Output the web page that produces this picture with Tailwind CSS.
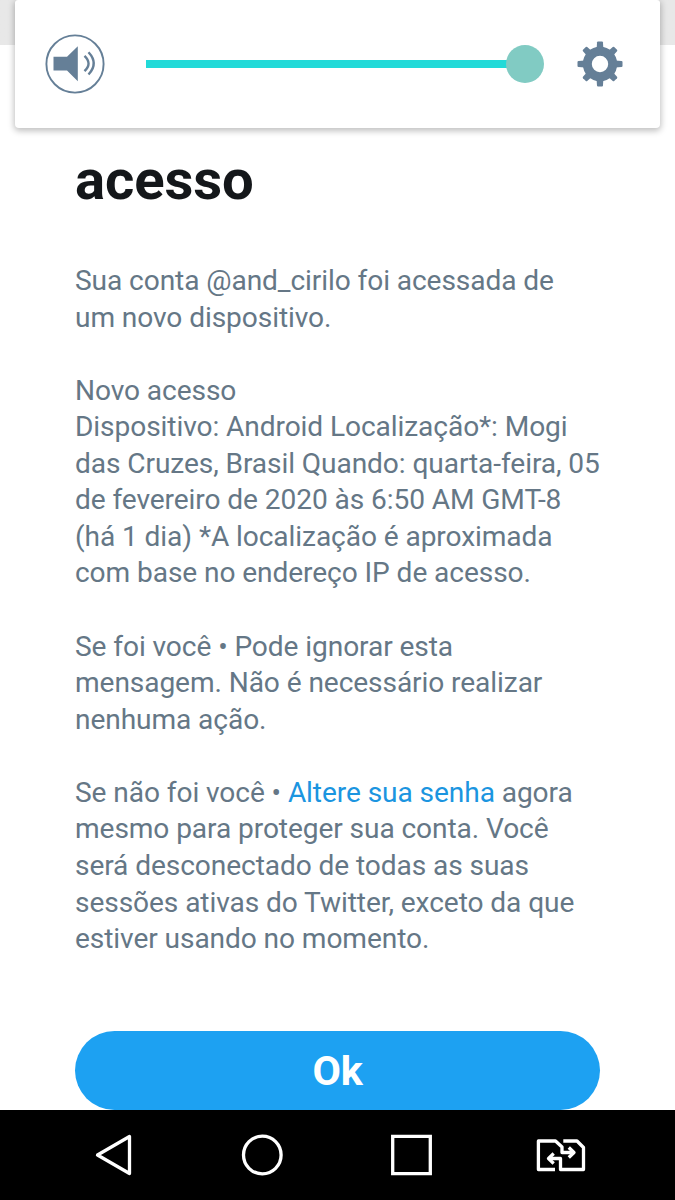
<!DOCTYPE html>
<html lang="pt-BR">
<head>
    <meta charset="UTF-8">
    <meta name="viewport" content="width=device-width, initial-scale=1.0">
    <script src="https://cdn.jsdelivr.net/npm/@tailwindcss/browser@4"></script>
    <title>Novo acesso</title>
</head>
<body class="h-[1200px] w-[675px] overflow-hidden bg-white font-['Roboto',sans-serif]">
    <div class="flex h-full flex-col">
        <!-- Volume panel -->
        <header class="h-[144px] bg-linear-to-b from-[#e8e8e8] from-[45px] to-white to-[45px] px-[15px]">
            <div class="flex h-[127.5px] items-center rounded-b-[4px] rounded-t-[3px] bg-white pl-[30px] pr-[37px] shadow-[0_2px_6px_1px_rgba(0,0,0,0.25)]">
                <svg class="h-[60px] w-[60px]" viewBox="0 0 60 60" fill="none">
                    <circle cx="30" cy="30" r="28.6" stroke="#657f97" stroke-width="1.9"/>
                    <path d="M8.5 22.8H22L32.8 12.3V47.3L22 36.6H8.5Z" fill="#657f97"/>
                    <path d="M39.5 21.8Q47.6 29.5 39.5 37.2M43.5 18.3Q54 29.5 43.5 40.5" stroke="#657f97" stroke-width="2.4"/>
                </svg>
                <div class="ml-[41px] flex w-[398px] items-center">
                    <div class="-mr-[1px] h-[8px] flex-1 bg-[#22dad8]"></div>
                    <div class="h-[38px] w-[38px] rounded-full bg-[#81cbc3]"></div>
                </div>
                <svg class="ml-auto h-[46px] w-[46px]" viewBox="-23 -23 46 46" fill="#657f97">
                    <circle r="12.7" fill="none" stroke="#657f97" stroke-width="9"/>
                    <path id="tooth" d="M-3.4 -15L-3 -21.5Q-2.9 -22.5 -2 -22.5H2Q2.9 -22.5 3 -21.5L3.4 -15Z"/>
                    <use href="#tooth" transform="rotate(45) scale(1 .98)"/>
                    <use href="#tooth" transform="rotate(90)"/>
                    <use href="#tooth" transform="rotate(135) scale(1 .98)"/>
                    <use href="#tooth" transform="rotate(180)"/>
                    <use href="#tooth" transform="rotate(225) scale(1 .98)"/>
                    <use href="#tooth" transform="rotate(270)"/>
                    <use href="#tooth" transform="rotate(315) scale(1 .98)"/>
                </svg>
            </div>
        </header>

        <!-- Message -->
        <main class="flex flex-1 flex-col px-[75px]">
            <h1 class="text-[56.25px] font-bold leading-[73px] tracking-[-0.1px] text-[#14171a]">acesso</h1>
            <div class="mt-[46px] space-y-[36.56px] whitespace-nowrap text-[28.125px] leading-[36.5625px] tracking-[-0.09px] text-[#657786]">
                <p>Sua conta @and_cirilo foi acessada de<br>um novo dispositivo.</p>
                <p>Novo acesso<br>Dispositivo: Android Localização*: Mogi<br>das Cruzes, Brasil Quando: quarta-feira, 05<br>de fevereiro de 2020 às 6:50 AM GMT-8<br>(há 1 dia) *A localização é aproximada<br>com base no endereço IP de acesso.</p>
                <p>Se foi você • Pode ignorar esta<br>mensagem. Não é necessário realizar<br>nenhuma ação.</p>
                <p>Se não foi você • <a href="#" class="text-[#1b95e0]">Altere sua senha</a> agora<br>mesmo para proteger sua conta. Você<br>será desconectado de todas as suas<br>sessões ativas do Twitter, exceto da que<br>estiver usando no momento.</p>
            </div>
            <button class="mt-auto h-[79px] shrink-0 rounded-full bg-[#1da1f2] pt-[2px] text-[41.25px] font-bold tracking-[-0.2px] text-white">Ok</button>
        </main>

        <!-- Navigation bar -->
        <nav class="flex h-[90px] shrink-0 items-center bg-black pl-[95px] pr-[89px]">
            <svg class="h-[42px] w-[38px]" viewBox="0 0 38 42" fill="none" stroke="white" stroke-width="3.3" stroke-linejoin="round">
                <path d="M2.5 21L34.5 2.5V39.5Z"/>
            </svg>
            <svg class="ml-[108px] h-[42px] w-[42px]" viewBox="0 0 42 42" fill="none" stroke="white" stroke-width="3.3">
                <circle cx="21.3" cy="21" r="18.8"/>
            </svg>
            <svg class="ml-[107px] h-[42px] w-[42px]" viewBox="0 0 42 42" fill="none" stroke="white" stroke-width="3.3">
                <path d="M2.7 2.3H40.3V39.7H2.7Z"/>
            </svg>
            <svg class="ml-auto h-[34px] w-[50px]" viewBox="0 0 50 34" fill="none" stroke="white" stroke-width="3.3" stroke-linejoin="round">
                <path d="M19 31.5H2.4V3H19.5L26 9V14.5H37"/>
                <path d="M27.3 3H41L47.5 9.5V31.5H24.5V20.5H13"/>
                <path d="M32.8 9.5L38 14.5L32.8 19.5M17.7 15.5L12.5 20.5L17.7 25.5"/>
            </svg>
        </nav>
    </div>
</body>
</html>
